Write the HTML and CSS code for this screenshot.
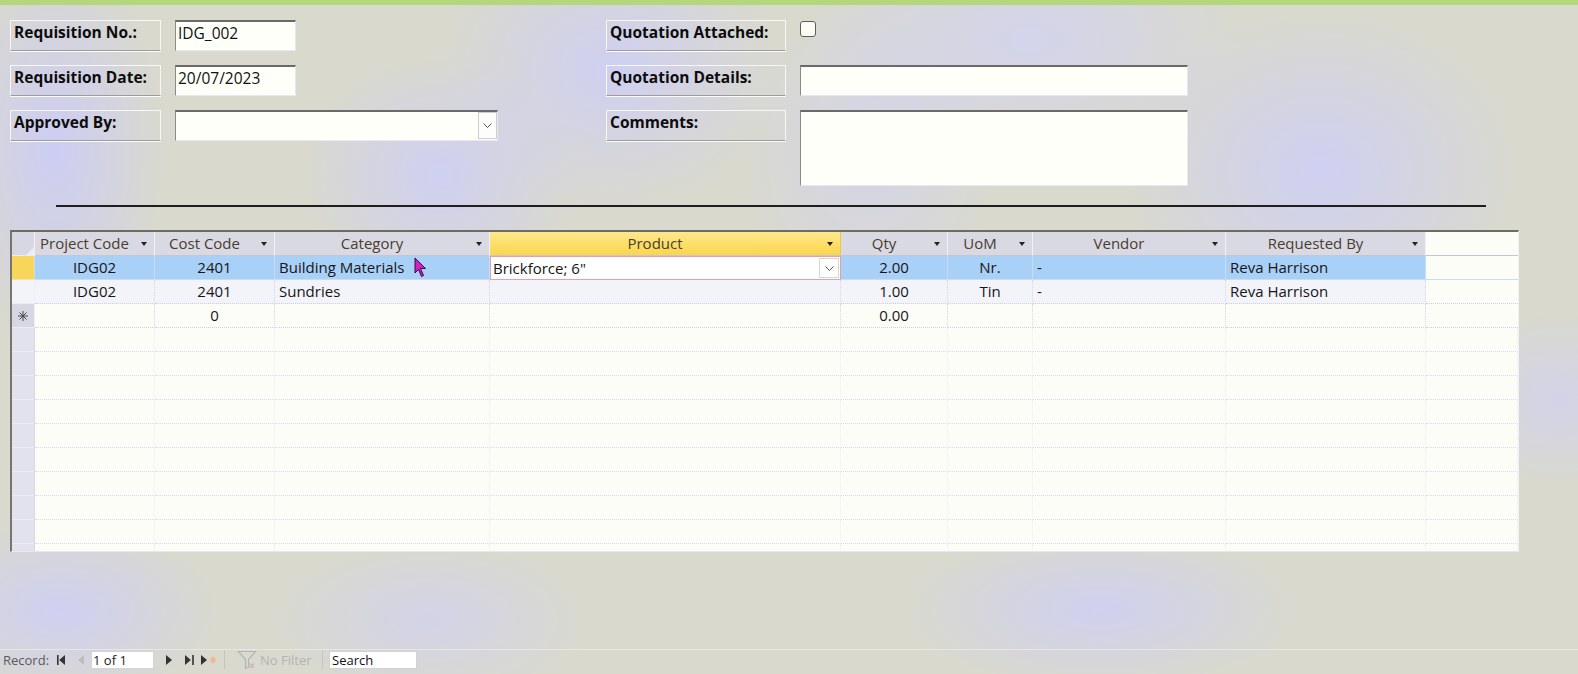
FILE: index.html
```html
<!DOCTYPE html>
<html>
<head>
<meta charset="utf-8">
<title>Requisition</title>
<link rel="stylesheet" href="styles.css">
</head>
<body>
<div class="topbar"></div>

<div class="form">
  <div class="col col-left">
    <div class="row"><div class="lbl">Requisition No.:</div><div class="inp short">IDG_002</div></div>
    <div class="row"><div class="lbl">Requisition Date:</div><div class="inp short">20/07/2023</div></div>
    <div class="row"><div class="lbl">Approved By:</div>
      <div class="inp combo"><span class="ddbtn"><svg width="9" height="5" viewBox="0 0 9 5"><path d="M0.5 0.5 L4.5 4.5 L8.5 0.5" fill="none" stroke="#555" stroke-width="1"/></svg></span></div>
    </div>
  </div>
  <div class="col col-right">
    <div class="row"><div class="lbl wide">Quotation Attached:</div><div class="chk"></div></div>
    <div class="row"><div class="lbl wide">Quotation Details:</div><div class="inp long"></div></div>
    <div class="row"><div class="lbl wide">Comments:</div><div class="inp long tall"></div></div>
  </div>
</div>

<div class="rule"></div>

<div class="grid">
  <div class="gr hd">
    <div class="c sel selhd"><svg width="8" height="8" viewBox="0 0 8 8"><path d="M8 0 L8 8 L0 8z" fill="#ececf2"/></svg></div>
    <div class="c"><span class="t">Project Code</span><span class="a"><svg width="6" height="4" viewBox="0 0 6 4"><path d="M0 0H6L3 4z" fill="#222"/></svg></span></div>
    <div class="c"><span class="t">Cost Code</span><span class="a"><svg width="6" height="4" viewBox="0 0 6 4"><path d="M0 0H6L3 4z" fill="#222"/></svg></span></div>
    <div class="c"><span class="t">Category</span><span class="a"><svg width="6" height="4" viewBox="0 0 6 4"><path d="M0 0H6L3 4z" fill="#222"/></svg></span></div>
    <div class="c prod"><span class="t">Product</span><span class="a"><svg width="6" height="4" viewBox="0 0 6 4"><path d="M0 0H6L3 4z" fill="#222"/></svg></span></div>
    <div class="c"><span class="t">Qty</span><span class="a"><svg width="6" height="4" viewBox="0 0 6 4"><path d="M0 0H6L3 4z" fill="#222"/></svg></span></div>
    <div class="c"><span class="t">UoM</span><span class="a"><svg width="6" height="4" viewBox="0 0 6 4"><path d="M0 0H6L3 4z" fill="#222"/></svg></span></div>
    <div class="c"><span class="t">Vendor</span><span class="a"><svg width="6" height="4" viewBox="0 0 6 4"><path d="M0 0H6L3 4z" fill="#222"/></svg></span></div>
    <div class="c"><span class="t">Requested By</span><span class="a"><svg width="6" height="4" viewBox="0 0 6 4"><path d="M0 0H6L3 4z" fill="#222"/></svg></span></div>
    <div class="c blank"></div>
  </div>

  <div class="gr r1">
    <div class="c sel cur"></div>
    <div class="c ctr">IDG02</div>
    <div class="c ctr">2401</div>
    <div class="c">Building Materials</div>
    <div class="c edit"><span class="ev">Brickforce; 6"</span><span class="ddbtn small"><svg width="9" height="5" viewBox="0 0 9 5"><path d="M0.5 0.5 L4.5 4.5 L8.5 0.5" fill="none" stroke="#555" stroke-width="1"/></svg></span></div>
    <div class="c ctr">2.00</div>
    <div class="c ctr">Nr.</div>
    <div class="c">-</div>
    <div class="c">Reva Harrison</div>
    <div class="c blank"></div>
  </div>

  <div class="gr r2">
    <div class="c sel"></div>
    <div class="c ctr">IDG02</div>
    <div class="c ctr">2401</div>
    <div class="c">Sundries</div>
    <div class="c"></div>
    <div class="c ctr">1.00</div>
    <div class="c ctr">Tin</div>
    <div class="c">-</div>
    <div class="c">Reva Harrison</div>
    <div class="c blank"></div>
  </div>

  <div class="gr r3">
    <div class="c sel newsel"><svg width="10" height="10" viewBox="0 0 10 10"><g stroke="#444" stroke-width="1"><path d="M5 0V10M0 5H10M1.5 1.5L8.5 8.5M8.5 1.5L1.5 8.5"/></g></svg></div>
    <div class="c"></div>
    <div class="c ctr">0</div>
    <div class="c"></div>
    <div class="c"></div>
    <div class="c ctr">0.00</div>
    <div class="c"></div>
    <div class="c"></div>
    <div class="c"></div>
    <div class="c blank"></div>
  </div>

  <div class="gr emp"><div class="c sel"></div><div class="c"></div><div class="c"></div><div class="c"></div><div class="c"></div><div class="c"></div><div class="c"></div><div class="c"></div><div class="c"></div><div class="c"></div></div>
  <div class="gr emp"><div class="c sel"></div><div class="c"></div><div class="c"></div><div class="c"></div><div class="c"></div><div class="c"></div><div class="c"></div><div class="c"></div><div class="c"></div><div class="c"></div></div>
  <div class="gr emp"><div class="c sel"></div><div class="c"></div><div class="c"></div><div class="c"></div><div class="c"></div><div class="c"></div><div class="c"></div><div class="c"></div><div class="c"></div><div class="c"></div></div>
  <div class="gr emp"><div class="c sel"></div><div class="c"></div><div class="c"></div><div class="c"></div><div class="c"></div><div class="c"></div><div class="c"></div><div class="c"></div><div class="c"></div><div class="c"></div></div>
  <div class="gr emp"><div class="c sel"></div><div class="c"></div><div class="c"></div><div class="c"></div><div class="c"></div><div class="c"></div><div class="c"></div><div class="c"></div><div class="c"></div><div class="c"></div></div>
  <div class="gr emp"><div class="c sel"></div><div class="c"></div><div class="c"></div><div class="c"></div><div class="c"></div><div class="c"></div><div class="c"></div><div class="c"></div><div class="c"></div><div class="c"></div></div>
  <div class="gr emp"><div class="c sel"></div><div class="c"></div><div class="c"></div><div class="c"></div><div class="c"></div><div class="c"></div><div class="c"></div><div class="c"></div><div class="c"></div><div class="c"></div></div>
  <div class="gr emp"><div class="c sel"></div><div class="c"></div><div class="c"></div><div class="c"></div><div class="c"></div><div class="c"></div><div class="c"></div><div class="c"></div><div class="c"></div><div class="c"></div></div>
  <div class="gr emp"><div class="c sel"></div><div class="c"></div><div class="c"></div><div class="c"></div><div class="c"></div><div class="c"></div><div class="c"></div><div class="c"></div><div class="c"></div><div class="c"></div></div>
  <div class="gr emp"><div class="c sel"></div><div class="c"></div><div class="c"></div><div class="c"></div><div class="c"></div><div class="c"></div><div class="c"></div><div class="c"></div><div class="c"></div><div class="c"></div></div>

  <svg class="cursor" width="13" height="21" viewBox="0 0 13 21"><path d="M1 1 L1 16 L4.5 12.5 L7.5 19.5 L9.5 18.5 L6.5 11.5 L11.5 11.5 Z" fill="#d21fc4" stroke="#3a0a38" stroke-width="1"/></svg>
</div>

<div class="nav">
  <span class="rec">Record:</span>
  <span class="ic w8"><svg width="8" height="10" viewBox="0 0 8 10"><rect x="0" y="0" width="1.6" height="10" fill="#333"/><path d="M8 0 L2.2 5 L8 10z" fill="#333"/></svg></span>
  <span class="ic w7 m12"><svg width="6" height="10" viewBox="0 0 6 10"><path d="M6 0 L0 5 L6 10z" fill="#bdbdbd"/></svg></span>
  <span class="pos">1 of 1</span>
  <span class="ic w7 m11"><svg width="6" height="10" viewBox="0 0 6 10"><path d="M0 0 L6 5 L0 10z" fill="#333"/></svg></span>
  <span class="ic w9 m13"><svg width="9" height="10" viewBox="0 0 9 10"><path d="M0 0 L5.8 5 L0 10z" fill="#333"/><rect x="7.2" y="0" width="1.6" height="10" fill="#333"/></svg></span>
  <span class="ic w18 m7"><svg width="18" height="10" viewBox="0 0 18 10"><path d="M0 0 L6 5 L0 10z" fill="#333"/><g stroke="#f0b48c" stroke-width="1.2"><path d="M12 1.5V8.5M8.8 5H15.2M9.8 2.6L14.2 7.4M14.2 2.6L9.8 7.4"/></g></svg></span>
  <span class="sep"></span>
  <span class="ic w20 m12"><svg width="20" height="20" viewBox="0 0 20 20"><path d="M1.5 1.5 H18.5 L11.5 9.5 V17 L8.5 18.5 V9.5 Z" fill="none" stroke="#b4b4b4" stroke-width="1.2"/><g stroke="#c8b4b4" stroke-width="1.2"><path d="M12.5 13.5 L17 18 M17 13.5 L12.5 18"/></g></svg></span>
  <span class="nofilt">No Filter</span>
  <span class="sep"></span>
  <span class="search">Search</span>
</div>
</body>
</html>
```

FILE: styles.css
```css
* { box-sizing: border-box; }
html, body { margin: 0; }
body {
  height: 674px;
  overflow: hidden;
  display: flex;
  flex-direction: column;
  font-family: "Open Sans", "Noto Sans", sans-serif;
  color: #111;
  background-color: #d9d9ce;
  background-image:
    radial-gradient(ellipse 110px 200px at 55px 150px, rgba(204,204,246,0.95), rgba(204,204,246,0)),
    radial-gradient(ellipse 140px 120px at 440px 175px, rgba(206,206,246,0.9), rgba(206,206,246,0)),
    radial-gradient(ellipse 170px 140px at 610px 70px, rgba(206,206,246,0.9), rgba(206,206,246,0)),
    radial-gradient(ellipse 220px 120px at 1030px 40px, rgba(210,210,244,0.8), rgba(210,210,244,0)),
    radial-gradient(ellipse 200px 160px at 1320px 170px, rgba(206,206,246,0.9), rgba(206,206,246,0)),
    radial-gradient(ellipse 130px 160px at 870px 150px, rgba(210,210,244,0.7), rgba(210,210,244,0)),
    radial-gradient(ellipse 160px 90px at 60px 610px, rgba(206,206,246,0.9), rgba(206,206,246,0)),
    radial-gradient(ellipse 200px 80px at 1100px 610px, rgba(206,206,246,0.85), rgba(206,206,246,0)),
    radial-gradient(ellipse 160px 80px at 430px 620px, rgba(208,208,244,0.7), rgba(208,208,244,0)),
    radial-gradient(ellipse 120px 90px at 1560px 400px, rgba(208,208,244,0.7), rgba(208,208,244,0));
}

.topbar { height: 5px; flex: none; background: #b5d77c; }

/* ---------- header form ---------- */
.form { display: flex; flex: none; padding: 15px 0 0 10px; }
.col { display: flex; flex-direction: column; gap: 14px; }
.col-left { width: 596px; }
.row { display: flex; gap: 14px; align-items: flex-start; }

.lbl {
  width: 151px;
  height: 31px;
  border: 1px solid #f7f7f7;
  border-bottom-color: #9c9c9c;
  box-shadow: 0 1px 0 #fbfbfb;
  padding-left: 3px;
  font-weight: 700;
  font-size: 15.5px;
  line-height: 22px;
  white-space: nowrap;
  color: #0c0c0c;
}
.lbl.wide { width: 180px; }

.inp {
  height: 31px;
  background: #fffffa;
  border-top: 2px solid #6a6a6a;
  border-left: 1px solid #8a8a8a;
  border-right: 1px solid #e8e8f2;
  border-bottom: 1px solid #e8e8f2;
  padding-left: 2px;
  font-size: 15.5px;
  line-height: 22px;
  color: #111;
}
.short { width: 121px; }
.long { width: 388px; }
.tall { height: 76px; }
.combo { width: 323px; display: flex; justify-content: flex-end; padding: 0 0 1px 0; }

.ddbtn {
  width: 19px;
  height: 27px;
  border: 1px solid #cdcdcd;
  background: #fdfdfb;
  display: flex;
  align-items: center;
  justify-content: center;
}
.chk {
  width: 16px;
  height: 16px;
  margin-top: 1px;
  border: 1px solid #5c5c5c;
  border-radius: 3px;
  background: #fcfcf4;
}

.rule {
  flex: none;
  width: 1430px;
  height: 2px;
  margin: 19px 0 0 56px;
  background: #1e1e1e;
}

/* ---------- datasheet ---------- */
.grid {
  position: relative;
  flex: none;
  width: 1509px;
  height: 322px;
  margin: 23px 0 0 10px;
  overflow: hidden;
  background: #fdfdf8;
  border-top: 2px solid #6c6c62;
  border-left: 2px solid #76766e;
  border-right: 1px solid #f2f2f2;
  border-bottom: 1px solid #e6e6ee;
}
.gr {
  display: grid;
  grid-template-columns: 23px 120px 120px 215px 351px 107px 85px 193px 200px 1fr;
  height: 24px;
}
.c {
  border-right: 1px dotted #d4d4ec;
  border-bottom: 1px dotted #cdcdea;
  font-size: 15px;
  line-height: 23px;
  padding: 0 4px;
  white-space: nowrap;
  overflow: hidden;
  color: #161616;
}
.ctr { text-align: center; }

.hd .c {
  display: flex;
  align-items: center;
  padding: 0;
  background: #d9d9e4;
  border-right: 1px solid #f0f0f5;
  border-bottom: 1px solid #c6c6d2;
  color: #4a3c2e;
}
.hd .c .t { flex: 1; text-align: center; }
.hd .c .a { width: 20px; display: flex; justify-content: center; align-items: center; }
.hd .c.prod { background: linear-gradient(#fee88e, #fcd54a); border-right-color: #e8c850; }
.hd .c.blank, .gr .c.blank { background: transparent; border-right: none; }
.hd .selhd { align-items: flex-end; justify-content: flex-end; padding: 0 2px 2px 0; }

.gr .sel {
  padding: 0;
  background: #d7d7e4;
  border-right: 1px solid #efeff5;
  border-bottom: 1px solid #ececf3;
}
.gr .sel.cur { background: #f8d65c; border-bottom-color: #efe4b0; }
.newsel { display: flex; align-items: center; justify-content: center; }

.r1 .c { background: #a9d0f7; border-right: 1px solid #c6ddf8; border-bottom: 1px solid #c8dcf2; }
.r1 .c.edit {
  background: #fff;
  border: 1px solid #e6a0aa;
  display: flex;
  align-items: center;
  padding: 0 1px 0 2px;
}
.r1 .c.edit .ev { flex: 1; }
.ddbtn.small { width: 20px; height: 20px; border-color: #d6d6d6; }

.r2 .c { background: #f3f3fa; }
.r2 .c.blank { background: #fdfdf8; }

.emp .c { border-right: 1px dotted #ececf6; border-bottom: 1px dotted #d8d8ee; }
.emp .c.sel { background: #e2e2ee; border-right: 1px solid #d6d6e6; border-bottom: 1px solid #ebebf3; }

.cursor { position: absolute; left: 402px; top: 25px; }

/* ---------- record navigation ---------- */
.nav {
  flex: none;
  margin-top: auto;
  margin-bottom: 5px;
  height: 20px;
  display: flex;
  align-items: center;
  padding-left: 3px;
  font-size: 13px;
  border-top: 1px solid #e6e6e6;
}
.rec { width: 54px; color: #5a5a5a; line-height: 18px; }
.ic { display: flex; align-items: center; justify-content: center; height: 18px; }
.w7 { width: 7px; } .w8 { width: 8px; } .w9 { width: 9px; } .w18 { width: 18px; } .w20 { width: 20px; }
.m7 { margin-left: 7px; } .m11 { margin-left: 11px; } .m12 { margin-left: 12px; } .m13 { margin-left: 13px; }
.pos {
  width: 63px;
  height: 18px;
  margin-left: 7px;
  background: #fff;
  border: 1px solid #d4d4d4;
  padding-left: 1px;
  line-height: 16px;
  color: #222;
}
.sep { width: 1px; height: 19px; margin-left: 5px; background: #c4c4c4; }
.nofilt { width: 62px; margin-left: 3px; color: #b4b4b4; line-height: 18px; }
.nav .nofilt + .sep { margin-left: 0; }
.search {
  width: 88px;
  height: 18px;
  margin-left: 6px;
  background: #fff;
  border: 1px solid #d2d2d2;
  padding-left: 2px;
  line-height: 16px;
  color: #111;
}
```
